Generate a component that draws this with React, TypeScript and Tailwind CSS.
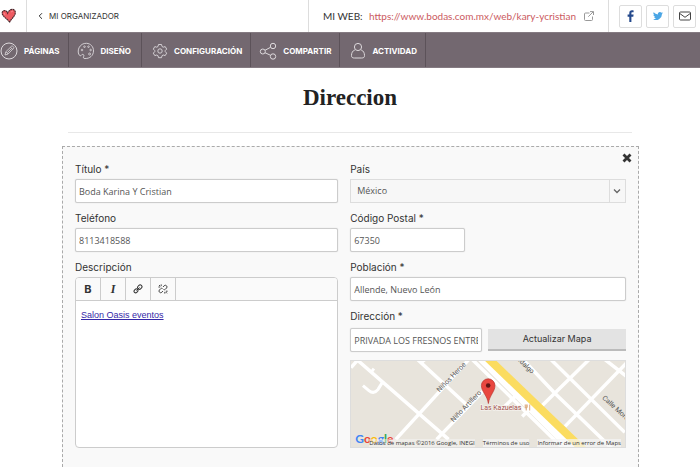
import React, { useState } from 'react';

interface FieldProps {
  id: string;
  label: string;
  initial: string;
  className?: string;
}

const inputClass =
  "block h-6 w-full min-w-0 rounded-xs border border-[#ccc] bg-white px-[3px] font-['Open_Sans',sans-serif] text-[9px] text-[#555] shadow-[0_0_1px_#ccc] focus:outline-none";

const Label: React.FC<{ htmlFor: string; children: React.ReactNode }> = ({ htmlFor, children }) => (
  <label htmlFor={htmlFor} className="mb-0.5 block text-[10px] leading-4 text-[#333]">
    {children}
  </label>
);

const Field: React.FC<FieldProps> = ({ id, label, initial, className = '' }) => {
  const [value, setValue] = useState(initial);
  return (
    <div className={className}>
      <Label htmlFor={id}>{label}</Label>
      <input id={id} type="text" value={value} onChange={(e) => setValue(e.target.value)} className={inputClass} />
    </div>
  );
};

const PencilIcon = () => (
  <svg viewBox="0 0 18 18" className="size-[18px]" fill="none" stroke="currentColor">
    <circle cx="9" cy="9" r="8" />
    <path d="M5 13l.8-3.2 5.8-5.7c.8-.7 2.9 1.2 2.1 2.1L8 12.100z M6 9.800l2.200 2.200 M10.500 5.200l2.200 2.200 M7.400 10.600l4.200-4.200" strokeWidth=".8" />
  </svg>
);

const PaletteIcon = () => (
  <svg viewBox="0 0 18 18" className="size-[18px]" fill="none" stroke="currentColor">
    <path d="M8 16.500c-1.500.3-2-.9-1.300-2.100.6-1.300-.4-2.500-1.600-1.900-1 .5-1.300 1.800-2.400 1C.9 12 .8 8.300 2 5.800 3.600 2.600 6.400 1.200 9.500 1.300c4.200.2 7.100 3.500 7 7.700-.1 4.600-3.700 7.700-8.500 7.500z" strokeWidth=".9" />
    <g strokeWidth=".8">
      <circle cx="5" cy="8" r=".8" />
      <circle cx="7.500" cy="4.700" r=".8" />
      <circle cx="11.500" cy="4.700" r=".8" />
      <circle cx="13.600" cy="8" r=".8" />
      <circle cx="12.600" cy="12" r="1" />
    </g>
  </svg>
);

const GearIcon = () => (
  <svg viewBox="0 0 16 16" className="size-4" fill="none" stroke="currentColor">
    <path d="M6.500 1.500h3l.5 2 1.200.7 2-.6 1.500 2.500-1.500 1.500v1l1.500 1.500-1.500 2.500-2-.6-1.200.7-.5 2h-3l-.5-2-1.200-.7-2 .6-1.500-2.500 1.500-1.500v-1L1.300 6.100l1.500-2.500 2 .6L6 3.500z" strokeLinejoin="round" strokeWidth=".9" />
    <circle cx="8" cy="8" r="2.200" strokeWidth=".9" />
  </svg>
);

const ShareIcon = () => (
  <svg viewBox="0 0 18 18" className="size-[18px]" fill="none" stroke="currentColor">
    <circle cx="3.800" cy="9.500" r="2.500" />
    <circle cx="14" cy="4" r="2.700" />
    <circle cx="14" cy="14.500" r="2.700" />
    <path d="M6 8.300l5.500-3 M6 10.700l5.500 2.600" />
  </svg>
);

const UserIcon = () => (
  <svg viewBox="0 0 16 18" className="h-[18px] w-4" fill="none" stroke="currentColor">
    <circle cx="8" cy="5" r="3.600" />
    <path d="M4.800 8C2.500 8.800 1.500 11 1.500 13.500c0 2 1 2.500 3 2.500h7c2 0 3-.5 3-2.500 0-2.500-1-4.700-3.300-5.500" />
  </svg>
);

const navItems = [
  { label: 'PÁGINAS', icon: <PencilIcon />, pad: 'pl-0 pr-2' },
  { label: 'DISEÑO', icon: <PaletteIcon />, pad: 'pl-2 pr-2.5' },
  { label: 'CONFIGURACIÓN', icon: <GearIcon />, pad: 'pl-2.5 pr-2' },
  { label: 'COMPARTIR', icon: <ShareIcon />, pad: 'pl-2 pr-2' },
  { label: 'ACTIVIDAD', icon: <UserIcon />, pad: 'pl-2.5 pr-2' },
];

const shareClass = 'flex h-[23px] w-[23px] items-center justify-center rounded-xs border border-[#ddd]';

const TopBar = () => (
  <header className="flex h-8 items-stretch text-[#333]">
    <a href="#inicio" aria-label="Inicio" className="flex w-[27px] items-center border-r border-[#ddd]">
      <svg viewBox="0 0 17 16" className="h-4 w-[17px]">
        <path d="M9.700 14C7 10.800 2.800 8.500 2.200 5.600 1.700 3 4.300 2 6 3c1 .5 1.300 1.300 1.600 2.200C8.500 3.200 10 1.300 12.500 1.400c2.500.2 3.400 2.500 2.500 4.800-1 2.900-3.900 4.800-5.300 7.800z" fill="#ef5b62" stroke="#4a2529" strokeWidth="1.100" strokeDasharray="2 .4" />
        <path d="M4 5l1 2 M11 4l2-1" stroke="#f79a9d" strokeWidth=".8" />
      </svg>
    </a>
    <a href="#organizador" className="flex items-center gap-1 pl-2.5 text-[8px] whitespace-nowrap">
      <svg viewBox="0 0 8 8" className="size-2" fill="none" stroke="#333">
        <path d="M5 1.200L2.200 4 5 6.800" />
      </svg>
      MI ORGANIZADOR
    </a>
    <div className="ml-auto flex items-center border-l border-[#ddd] pr-3.5 pl-3.5 font-['Lato',sans-serif]">
      <span className="w-[46px] text-[10px] whitespace-nowrap">MI WEB:</span>
      <a href="#web" className="text-[10px] whitespace-nowrap text-[#cb5a60]">
        https://www.bodas.com.mx/web/kary-ycristian
      </a>
      <svg viewBox="0 0 10 10" className="ml-2 size-2.5" fill="none" stroke="#999">
        <path d="M5.500 2H1.500Q.5 2 .5 3v5.500q0 1 1 1h6q1 0 1-1V5.500 M6 .6h3.500V4 M9.300.7L4.300 5.700" />
      </svg>
    </div>
    <div className="flex items-center gap-1 border-l border-[#ddd] pr-1 pl-2.5">
      <a href="#facebook" aria-label="Facebook" className={shareClass}>
        <svg viewBox="0 0 8 12" className="h-3 w-2" fill="#24498c">
          <path d="M2.300 12V6.700H.6V4.600h1.700V3C2.300 1.100 3.300.3 5 .3c.8 0 1.400.1 1.600.1v1.900H5.400c-.8 0-1 .4-1 1v1.300h2.200l-.3 2.100H4.400V12z" />
        </svg>
      </a>
      <a href="#twitter" aria-label="Twitter" className={shareClass}>
        <svg viewBox="0 0 24 24" className="size-2.5" fill="#4ba6e5">
          <path d="M24 4.600a10 10 0 0 1-2.800.8 5 5 0 0 0 2.100-2.700 10 10 0 0 1-3.100 1.200 4.900 4.900 0 0 0-8.400 4.500A14 14 0 0 1 1.700 3.200a4.900 4.900 0 0 0 1.500 6.500 5 5 0 0 1-2.200-.6 4.900 4.900 0 0 0 3.900 4.900 5 5 0 0 1-2.200.1 4.900 4.900 0 0 0 4.600 3.400A10 10 0 0 1 0 19.500a14 14 0 0 0 21.500-12.400A10 10 0 0 0 24 4.600z" />
        </svg>
      </a>
      <a href="#correo" aria-label="Correo" className={shareClass}>
        <svg viewBox="0 0 12 10" className="h-2.5 w-3" fill="none" stroke="#444">
          <rect x=".5" y="1" width="11" height="8" rx="1" />
          <path d="M.8 2.500L6 6.300l5.200-3.800" />
        </svg>
      </a>
    </div>
  </header>
);

const NavBar = () => (
  <nav className="flex h-9 border-y border-[#857b82] bg-[#736870] font-bold text-white">
    {navItems.map((item) => (
      <a key={item.label} href="#seccion" className={`flex items-center gap-1.5 border-r border-[#5c5259] pt-0.5 text-[8px] whitespace-nowrap ${item.pad}`}>
        <span className="text-[#ddd9dc]">{item.icon}</span>
        {item.label}
      </a>
    ))}
  </nav>
);

const toolClass = 'flex w-[25px] items-center justify-center border-r border-[#ccc] text-[#333]';

const Editor = () => (
  <div className="flex grow flex-col overflow-hidden rounded border border-[#ccc] bg-white">
    <div className="flex h-[23px] shrink-0 border-b border-[#ccc] bg-[#fafafa]">
      <button type="button" aria-label="Negrita" className={`${toolClass} text-[11px] font-bold`}>B</button>
      <button type="button" aria-label="Cursiva" className={`${toolClass} font-['Liberation_Serif',serif] text-[12px] font-bold italic`}>I</button>
      <button type="button" aria-label="Enlace" className={toolClass}>
        <svg viewBox="0 0 10 10" className="size-2.5" fill="none" stroke="currentColor">
          <rect x="4.500" y="1.300" width="4.600" height="3.600" rx="1.700" transform="rotate(-45 6.800 3.100)" />
          <rect x=".9" y="5.200" width="4.200" height="3.200" rx="1.600" transform="rotate(-45 3 6.800)" />
          <path d="M3.500 6.500l3-3" />
        </svg>
      </button>
      <button type="button" aria-label="Quitar enlace" className={toolClass}>
        <svg viewBox="0 0 10 10" className="size-2.5" fill="none" stroke="currentColor" strokeWidth=".9">
          <path d="M5 3l1.200-1.300q1.200-1 2.300.1t.1 2.200L7.300 5.300q-.8.800-1.800.2 M5 7L3.800 8.300q-1.200 1-2.300-.1t-.1-2.200l1.300-1.300q.8-.8 1.800-.2 M.4 3h1.800 M3.200.4v1.700 M1 1l1.200 1.200 M7.800 7.200h1.800 M6.800 7.900v1.700 M7.800 8.100L9 9.300" />
        </svg>
      </button>
    </div>
    <div id="descripcion" role="textbox" aria-label="Descripción" contentEditable suppressContentEditableWarning className="grow px-[5px] py-1.5 font-['Liberation_Sans',sans-serif] text-[9px] leading-4 focus:outline-none">
      <a href="#salon" className="text-[#3528a8] underline">Salon Oasis eventos</a>
    </div>
  </div>
);

const LocationMap = () => (
  <div className="relative mt-2 h-[88px] overflow-hidden border border-[#ddd] bg-[#e8e4dc]">
    <svg viewBox="0 0 275 87" preserveAspectRatio="xMidYMid slice" className="h-full w-full font-['Roboto',sans-serif] text-[7px]">
      <g fill="none" stroke="#fff" strokeWidth="3.500">
        <path d="M0 7L7-1 M6-1L98 79 M45 79L120-3 M86 79L140 23 M66-2L118 46 M69 3l5-4" />
        <path d="M12 25l6 5q5 4 9-1l5-8 M20 12l3-4" strokeWidth="3" />
        <path d="M200-2L275 72 M174 0L205 33 262 88 M188 49L240-2 M215 66L277 2 M254-2L277 16 M151 49L167 34 M172 56l8-8" />
        <path d="M121-2L214 89" />
      </g>
      <path d="M132-4L230 94" fill="none" stroke="#fff" strokeWidth="12" />
      <path d="M136-4L238 94" fill="none" stroke="#fbdc60" strokeWidth="8" />
      <g fill="#555">
        <text transform="translate(89 32) rotate(-46)">Niños Heroe</text>
        <text transform="translate(103 62) rotate(-46)">Niño Artillero</text>
        <text transform="translate(164 -3) rotate(43)">Hidalgo</text>
        <text transform="translate(252 38) rotate(42)">Calle Morelos</text>
      </g>
      <text x="130" y="50" fill="#a4524f" stroke="#f5f2ed" strokeWidth="1.500" paintOrder="stroke">Las Kazuelas</text>
      <path d="M175 44v3q1 1 2 0v-3 M176 44v6 M179.500 44v6" fill="none" stroke="#d4925c" strokeWidth=".8" />
      <path d="M138 43c-1-8-7-12-7-18a6.800 6.800 0 0 1 13.600 0c0 6-5.600 10-6.600 18z" fill="#e9473f" stroke="#b8322d" strokeWidth=".7" />
      <circle cx="137.800" cy="25" r="2.300" fill="#611614" />
    </svg>
    <div className="absolute inset-x-0 bottom-0 flex h-2 items-center justify-end gap-2 pr-1 font-['Open_Sans',sans-serif] text-[6px] whitespace-nowrap text-[#333]">
      <div aria-label="Google" className="absolute bottom-0 left-1 flex font-['Lato',sans-serif] text-[12px] leading-4 font-bold">
        <span className="text-[#4285f4]">G</span>
        <span className="text-[#ea4335]">o</span>
        <span className="text-[#fbbc05]">o</span>
        <span className="text-[#4285f4]">g</span>
        <span className="text-[#34a853]">l</span>
        <span className="text-[#ea4335]">e</span>
      </div>
      <span className="relative bg-[#f5f5f5]/50">Datos de mapas ©2016 Google, INEGI</span>
      <a href="#terminos" className="bg-[#f5f5f5]/70">Términos de uso</a>
      <a href="#error" className="bg-[#f5f5f5]/70">Informar de un error de Maps</a>
    </div>
  </div>
);

const AddressForm = () => {
  const [country, setCountry] = useState('México');

  return (
    <form onSubmit={(e) => e.preventDefault()} className="relative mt-[13px] mr-[61px] ml-[62px] grid grow grid-cols-[21fr_22fr] content-start gap-x-3 border border-b-0 border-dashed border-[#aaa] bg-[#f9f9f9] px-3 pt-3.5 pb-4">
      <button type="button" aria-label="Cerrar" className="absolute top-1.5 right-1.5 flex size-2.5 items-center justify-center text-[#333]">
        <svg viewBox="0 0 10 10" className="size-2.5" fill="none" stroke="currentColor" strokeWidth="2.800">
          <path d="M1.500 1.500l7 7 M8.500 1.500l-7 7" />
        </svg>
      </button>

      <div className="flex min-w-0 flex-col gap-[7px]">
        <Field id="titulo" label="Título *" initial="Boda Karina Y Cristian" />
        <Field id="telefono" label="Teléfono" initial="8113418588" />
        <div className="flex grow flex-col">
          <Label htmlFor="descripcion">Descripción</Label>
          <Editor />
        </div>
      </div>

      <div className="flex min-w-0 flex-col gap-[7px]">
        <div>
          <Label htmlFor="pais">País</Label>
          <div className="relative h-6 border border-[#ddd] bg-[#f7f7f7]">
            <select id="pais" value={country} onChange={(e) => setCountry(e.target.value)} className="block h-full w-full appearance-none bg-transparent px-1.5 font-['Open_Sans',sans-serif] text-[9px] text-[#555] focus:outline-none">
              <option>México</option>
              <option>España</option>
            </select>
            <div className="pointer-events-none absolute inset-y-0 right-0 flex w-4 items-center justify-center border-l border-[#ddd]">
              <svg viewBox="0 0 8 8" className="size-2" fill="none" stroke="#666" strokeWidth="1.300">
                <path d="M1 2.500l3 3 3-3" />
              </svg>
            </div>
          </div>
        </div>
        <Field id="cp" label="Código Postal *" initial="67350" className="w-5/12" />
        <Field id="poblacion" label="Población *" initial="Allende, Nuevo León" />
        <div>
          <Label htmlFor="direccion">Dirección *</Label>
          <div className="flex items-center gap-1.5 pt-0.5">
            <input id="direccion" type="text" defaultValue="PRIVADA LOS FRESNOS ENTRE" className={inputClass} />
            <button type="button" className="h-[22px] w-1/2 shrink-0 border-b-2 border-[#bbb] bg-[#e3e3e3] text-[9px] text-[#333]">
              Actualizar Mapa
            </button>
          </div>
          <LocationMap />
        </div>
      </div>
    </form>
  );
};

export default function App() {
  return (
    <div className="flex min-h-screen flex-col bg-white font-['Inter',sans-serif]">
      <TopBar />
      <NavBar />
      <main className="flex grow flex-col">
        <h1 className="pt-3.5 text-center font-['Liberation_Serif',serif] text-[23px] leading-8 font-bold text-[#222]">Direccion</h1>
        <hr className="mx-[68px] mt-[18px] border-[#e8e8e8]" />
        <AddressForm />
      </main>
    </div>
  );
}
